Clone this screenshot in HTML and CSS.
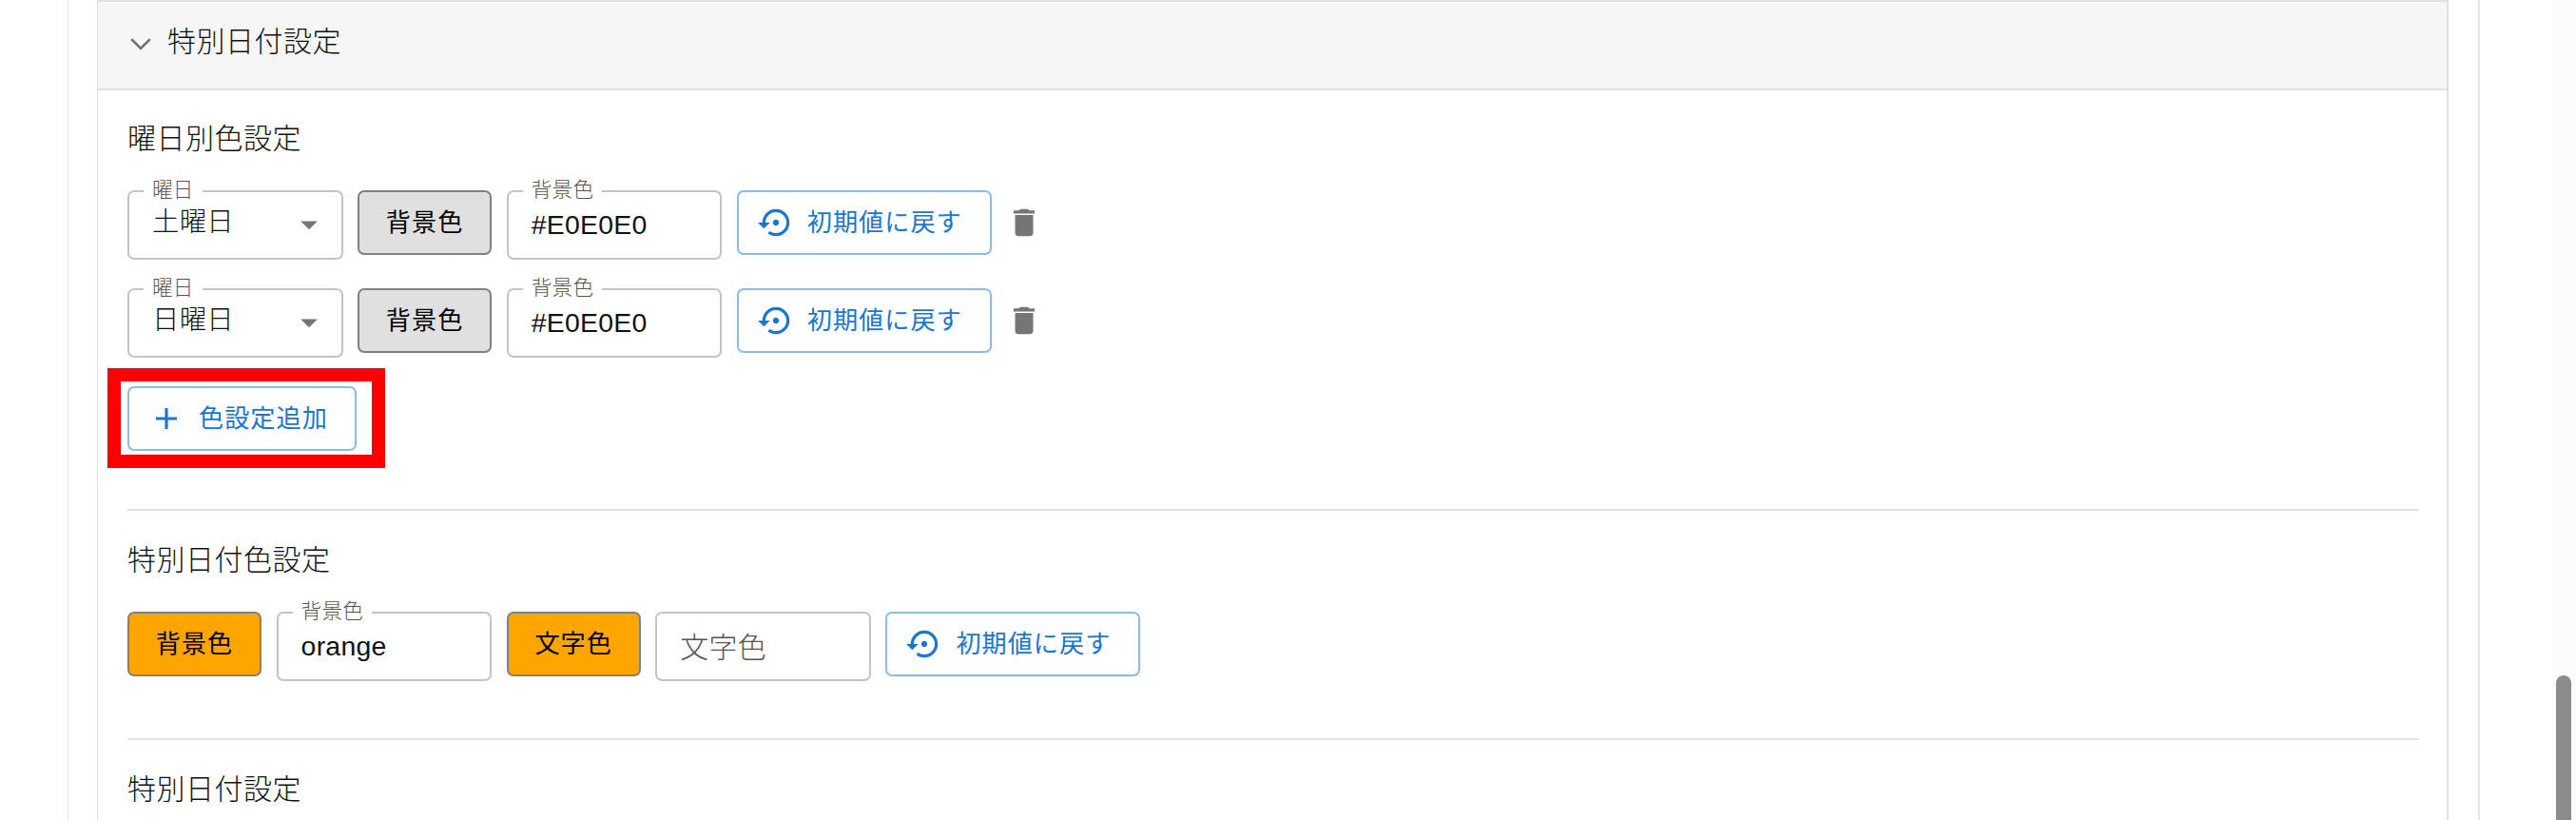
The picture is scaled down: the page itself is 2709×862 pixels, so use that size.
FILE: index.html
```html
<!DOCTYPE html>
<html lang="ja">
<head>
    <meta charset="UTF-8">
    <meta name="viewport" content="width=device-width, initial-scale=1.0">
    <title>特別日付設定</title>
    <link rel="stylesheet" href="styles.css">
</head>
<body>

<!-- 共通アイコン -->
<svg class="icon-defs">
    <symbol id="restore" viewBox="0 0 24 24">
        <path d="M14 12c0-1.1-.9-2-2-2s-2 .9-2 2 .9 2 2 2 2-.9 2-2zm-2-9c-4.97 0-9 4.03-9 9H0l4 4 4-4H5c0-3.87 3.13-7 7-7s7 3.13 7 7-3.13 7-7 7c-1.51 0-2.91-.49-4.06-1.3l-1.42 1.44C8.04 20.3 9.94 21 12 21c4.97 0 9-4.03 9-9s-4.03-9-9-9z"/>
    </symbol>
    <symbol id="delete" viewBox="0 0 24 24">
        <path d="M6 19c0 1.1.9 2 2 2h8c1.1 0 2-.9 2-2V7H6v12zM19 4h-3.5l-1-1h-5l-1 1H5v2h14V4z"/>
    </symbol>
    <symbol id="add" viewBox="0 0 24 24">
        <path d="M19 13h-6v6h-2v-6H5v-2h6V5h2v6h6v2z"/>
    </symbol>
    <symbol id="arrow" viewBox="0 0 24 24">
        <path d="M7 10l5 5 5-5z"/>
    </symbol>
</svg>

<div class="page">
    <div class="panel">
        <div class="accordion">
            <div class="accordion-header">
                <svg class="chevron" viewBox="0 0 22 13"><path d="M1.2 1.2L11 11l9.8-9.8"/></svg>
                <span class="title">特別日付設定</span>
            </div>
            <div class="accordion-body">
                <!-- 曜日別 -->
                <div class="section">
                    <div class="title">曜日別色設定</div>
                    <div class="row">
                        <div class="field select">
                            <span class="label">曜日</span>
                            <span class="value">土曜日</span>
                            <svg class="icon"><use href="#arrow"/></svg>
                        </div>
                        <button class="color-btn gray">背景色</button>
                        <div class="field"><span class="label">背景色</span><span class="value">#E0E0E0</span></div>
                        <button class="btn reset"><svg class="icon"><use href="#restore"/></svg><span>初期値に戻す</span></button>
                        <svg class="icon trash"><use href="#delete"/></svg>
                    </div>
                    <div class="row">
                        <div class="field select">
                            <span class="label">曜日</span>
                            <span class="value">日曜日</span>
                            <svg class="icon"><use href="#arrow"/></svg>
                        </div>
                        <button class="color-btn gray">背景色</button>
                        <div class="field"><span class="label">背景色</span><span class="value">#E0E0E0</span></div>
                        <button class="btn reset"><svg class="icon"><use href="#restore"/></svg><span>初期値に戻す</span></button>
                        <svg class="icon trash"><use href="#delete"/></svg>
                    </div>
                    <div class="highlight">
                        <button class="btn add"><svg class="icon"><use href="#add"/></svg><span>色設定追加</span></button>
                    </div>
                </div>

                <!-- 特別日付の色 -->
                <div class="section">
                    <div class="title">特別日付色設定</div>
                    <div class="row">
                        <button class="color-btn orange">背景色</button>
                        <div class="field"><span class="label">背景色</span><span class="value">orange</span></div>
                        <button class="color-btn orange">文字色</button>
                        <div class="field"><span class="value placeholder">文字色</span></div>
                        <button class="btn reset"><svg class="icon"><use href="#restore"/></svg><span>初期値に戻す</span></button>
                    </div>
                </div>

                <div class="section">
                    <div class="title">特別日付設定</div>
                </div>
            </div>
        </div>
    </div>
    <div class="scrollbar"><div class="thumb"></div></div>
</div>

</body>
</html>
```
FILE: styles.css
```css
* {
    box-sizing: border-box;
}

body {
    margin: 0;
    height: 862px;
    overflow: hidden;
    background-color: #fff;
    color: #111;
    font-family: "Liberation Sans", "Noto Sans CJK JP", sans-serif;
    font-size: 28.4px;
    font-weight: 300;
    letter-spacing: 0.00938em;
}

.icon-defs {
    display: none;
}

.icon {
    width: 38px;
    height: 38px;
    flex: none;
    fill: currentColor;
}

.page {
    display: flex;
    justify-content: space-between;
    height: 862px;
}

.panel {
    width: 2537px;
    margin-left: 71px;
    padding: 0 31px 0 30px;
    border: solid #e4e4e4;
    border-width: 0 2px 0 1px;
}

.accordion {
    height: 862px;
    border: 2px solid #e0e0e0;
    border-bottom: none;
    border-left-width: 1px;
}

.accordion-header {
    display: flex;
    align-items: center;
    height: 93px;
    padding: 0 0 8px 34px;
    background-color: #f6f6f6;
    border-bottom: 2px solid #e0e0e0;
}

.chevron {
    width: 22px;
    height: 13px;
    margin: 6px 17px 0 0;
    fill: none;
    stroke: #707070;
    stroke-width: 2.6;
}

.title {
    height: 40px;
    font-size: 30px;
    line-height: 40px;
    letter-spacing: 0.016em;
}

.accordion-body {
    padding: 0 29px 0 31px;
}

.section {
    padding-top: 31px;
    border-bottom: 2px solid #e2e2e2;
}

.section:nth-child(1) {
    height: 442px;
}

.section:nth-child(2) {
    height: 241px;
    padding-top: 32px;
}

.section:last-child {
    padding-top: 32px;
    border-bottom: none;
}

.row {
    display: flex;
    align-items: flex-start;
    gap: 15.6px;
    height: 73px;
    margin-top: 34px;
}

.row + .row {
    margin-top: 30px;
}

.field {
    position: relative;
    display: flex;
    align-items: center;
    width: 226.5px;
    height: 73px;
    padding: 0 13px 0 24px;
    border: 2px solid #c4c4c4;
    border-radius: 7px;
}

/* ラベルは枠線の上に重ねる */
.label {
    position: absolute;
    left: 15px;
    top: -18px;
    padding: 0 9px;
    background-color: #fff;
    color: #555;
    font-size: 21.6px;
    line-height: 32px;
}

.value {
    flex: 1;
}

.select .value {
    padding-bottom: 12px;
}

.select .icon {
    width: 42px;
    height: 42px;
    margin-top: -2px;
    color: #757575;
}

.placeholder {
    padding-bottom: 3px;
    color: #555;
    font-size: 30px;
}

.btn,
.color-btn {
    display: flex;
    align-items: center;
    justify-content: center;
    height: 68px;
    padding: 0 0 4px;
    border-radius: 7px;
    font-family: inherit;
    font-size: 26.2px;
    font-weight: 400;
    letter-spacing: 0.037em;
}

.color-btn {
    width: 141px;
    border: 2px solid #808080;
    color: #000;
}

.gray {
    background-color: #e0e0e0;
}

.orange {
    background-color: #ffa500;
}

.btn {
    justify-content: flex-start;
    border: 2px solid #8cbbe9;
    background-color: #fff;
    color: #1976d2;
}

.reset {
    width: 268px;
    padding-left: 20px;
}

.reset .icon {
    margin: 4px 14px 0 0;
}

.trash {
    margin: 15px 0 0;
    color: #757575;
}

.highlight {
    width: 292px;
    height: 105px;
    margin: 11px 0 0 -21px;
    padding: 5px 7px;
    border: 14px solid #f00;
}

.add {
    width: 241px;
    padding-left: 20px;
}

.add .icon {
    margin: 4px 15px 0 0;
}

.scrollbar {
    width: 25px;
    height: 862px;
    padding: 710px 5px 0 4px;
    background-color: #fbfbfb;
}

.thumb {
    height: 170px;
    border-radius: 8px;
    background-color: #8b8b8b;
}
```
